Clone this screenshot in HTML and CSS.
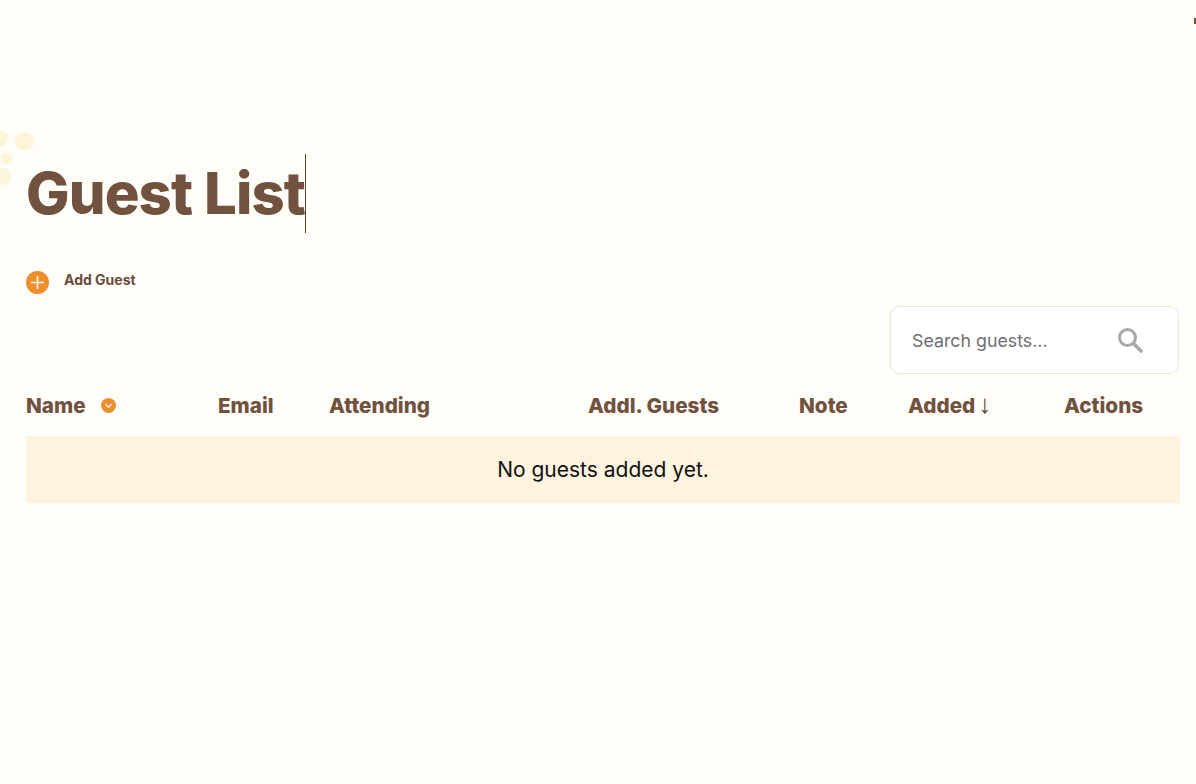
FILE: index.html
```html
<html>
<head>
	<link rel="stylesheet" href="styles.css">
</head>
<body>
	<div class="dot dot-a"></div>
	<div class="dot dot-b"></div>
	<div class="dot dot-c"></div>
	<div class="dot dot-d"></div>
	<div class="corner"></div>
	<div class="content">
		<h1><span class="typed">Guest List</span></h1>
		<div class="add">
			<svg class="add-icon" viewBox="0 0 24 24" width="23" height="23">
				<circle cx="12" cy="12" r="12" fill="#ee8f2d"/>
				<path d="M12 6v12M6 12h12" stroke="#fff3df" stroke-width="1.8" stroke-linecap="round"/>
			</svg>
			<span>Add Guest</span>
		</div>
		<div class="search-row">
			<div class="search">
				<span>Search guests...</span>
				<svg viewBox="0 0 26 26" width="26" height="26">
					<circle cx="10.5" cy="10.5" r="8" fill="none" stroke="#aaa9a6" stroke-width="3"/>
					<path d="M16.5 16.5L24 24" stroke="#aaa9a6" stroke-width="3.6" stroke-linecap="round"/>
				</svg>
			</div>
		</div>
		<div class="guests">
			<div class="head">
				<span>Name</span>
				<svg class="sort" viewBox="0 0 16 16" width="15" height="15">
					<circle cx="8" cy="8" r="8" fill="#ee8f2d"/>
					<path d="M5 6.8l3 3 3-3" fill="none" stroke="#fff3df" stroke-width="1.5" stroke-linecap="round"/>
				</svg>
			</div>
			<div class="head">Email</div>
			<div class="head">Attending</div>
			<div class="head">Addl. Guests</div>
			<div class="head">Note</div>
			<div class="head"><span>Added</span><span class="arrow">↓</span></div>
			<div class="head">Actions</div>
			<div class="empty">No guests added yet.</div>
		</div>
	</div>
</body>
</html>
```
FILE: styles.css
```css
html, body {
	height: 100%;
}
body {
	margin: 0;
	overflow: hidden;
	background: #fffdf7;
	font-family: Inter, "Liberation Sans", sans-serif;
	color: #70523f;
}
.content {
	padding: 154px 16px 0 26px;
}
h1 {
	margin: 0;
	height: 79px;
	font-size: 58px;
	line-height: 79px;
	font-weight: 800;
	letter-spacing: -0.9px;
}
.typed {
	display: inline-block;
	border-right: 1px solid #5e4435;
}
.add {
	display: flex;
	align-items: center;
	gap: 15px;
	margin-top: 38px;
	height: 23px;
	font-size: 14px;
	font-weight: 700;
	color: #6b4c3b;
}
.add span {
	position: relative;
	top: -3px;
}
.search-row {
	display: flex;
	justify-content: flex-end;
	margin-top: 12px;
	padding-right: 1px;
}
.search {
	display: flex;
	align-items: center;
	justify-content: space-between;
	box-sizing: border-box;
	width: 289px;
	height: 68px;
	padding: 0 35px 0 21px;
	background: #fff;
	border: 1px solid #ece9e3;
	border-radius: 10px;
	font-size: 17.8px;
	color: #6f6f6d;
}
.guests {
	display: grid;
	grid-template-columns: 192px 111px 259px 211px 109px 156px 116px;
	margin-top: 12px;
}
.head {
	display: flex;
	align-items: center;
	height: 38px;
	padding-bottom: 12px;
	font-size: 20.7px;
	font-weight: 800;
}
.sort {
	margin-left: 15px;
}
.arrow {
	margin-left: 3px;
	font-family: "Liberation Serif", serif;
	font-size: 26px;
	font-weight: 400;
	line-height: 26px;
	color: #5e4435;
}
.empty {
	grid-column: 1 / -1;
	height: 67px;
	line-height: 67px;
	text-align: center;
	background: #fef3df;
	font-size: 21px;
	color: #111;
}
.dot {
	position: absolute;
	border-radius: 50%;
	background: #fdf5da;
}
.dot-a {
	left: 15px;
	top: 132px;
	width: 19px;
	height: 19px;
}
.dot-b {
	left: -8px;
	top: 130px;
	width: 16px;
	height: 16px;
}
.dot-c {
	left: 1px;
	top: 153px;
	width: 11px;
	height: 11px;
}
.dot-d {
	left: -6px;
	top: 168px;
	width: 17px;
	height: 17px;
}
.corner {
	position: absolute;
	right: 0;
	top: 18px;
	width: 2px;
	height: 6px;
	background: #74523f;
}
```
